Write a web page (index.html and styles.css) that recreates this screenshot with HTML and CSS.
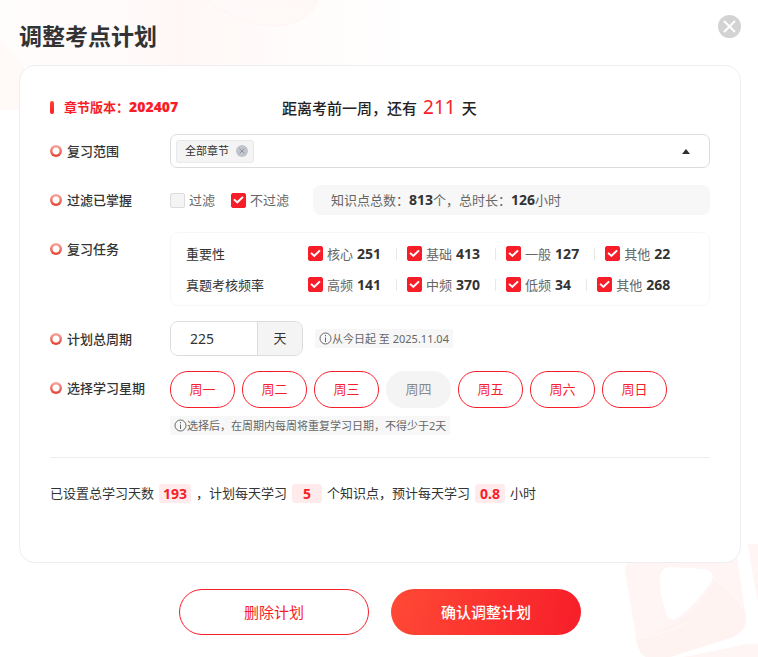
FILE: index.html
```html
<!DOCTYPE html>
<html lang="zh-CN">
<head>
<meta charset="utf-8">
<meta name="viewport" content="width=device-width, initial-scale=1">
<title>调整考点计划</title>
<link rel="stylesheet" href="styles.css">
</head>
<body>
<main class="dialog">
  <svg class="decor decor-top" width="420" height="120" viewBox="0 0 420 120" aria-hidden="true">
    <defs>
      <linearGradient id="wash" x1="0" x2="1" y1="0" y2="0">
        <stop offset="0" stop-color="#fffcfc"/><stop offset=".29" stop-color="#fffbfb"/><stop offset=".42" stop-color="#fff7f6"/><stop offset=".7" stop-color="#fffcfb"/><stop offset="1" stop-color="#fff"/>
      </linearGradient>
      <linearGradient id="drop" x1="0" x2="1" y1="0" y2="0">
        <stop offset="0" stop-color="#fffafa"/><stop offset="1" stop-color="#fef8f6"/>
      </linearGradient>
    </defs>
    <path d="M0 0H420V66H0Z" fill="url(#wash)"/>
    <path d="M0 38Q14 60 24 66V110H0Z" fill="#fff9f8"/>
    <path d="M205 0Q244 26 276 26Q308 24 318 0Z" fill="url(#drop)" stroke="#fdf5f3"/>
  </svg>
  <svg class="decor decor-bottom" width="134" height="114" viewBox="0 0 134 114" aria-hidden="true">
    <path d="M1 28Q1 20 8 14H113L122 74Q123 89 106 95L46 114H22Q15 110 13 100Z" fill="#fff5f4"/>
    <path d="M11 96Q66 84 91 38Q112 50 122 74Q123 89 106 95L46 114H22Q15 110 13 100Z" fill="#fff3f2"/>
    <path d="M11 96Q40 92 62 80M92 38Q112 50 122 70" fill="none" stroke="#fffaf9"/>
    <path d="M36 36Q36 24 48 24L80 26Q93 29 87 39Q75 58 56 73Q44 82 41 67Q36 52 36 36Z" fill="#fff"/>
    <path d="M124 1H134V58Q130 42 124 1ZM59 114L109 104Q122 100 134 101V114Z" fill="#fff5f4"/>
  </svg>

  <header class="dialog-header">
    <h1>调整考点计划</h1>
    <button class="close" type="button" aria-label="关闭">
      <svg width="23" height="23" viewBox="0 0 23 23" aria-hidden="true"><circle cx="11.500" cy="11.500" r="11.500" fill="#d3d3d3"/><path d="M6 6L17 17M17 6L6 17" stroke="#fff" stroke-width="2"/></svg>
    </button>
  </header>

  <form id="plan" class="card">
    <div class="intro">
      <p class="version">章节版本：<b>202407</b></p>
      <p class="countdown">距离考前一周，还有<span class="days">211</span>天</p>
    </div>

    <div class="row">
      <span class="label" id="range-label">复习范围</span>
      <div class="picker" role="group" aria-labelledby="range-label">
        <span class="tag">全部章节
          <button type="button" aria-label="移除全部章节"><svg width="12" height="12" viewBox="0 0 12 12" aria-hidden="true"><circle cx="6" cy="6" r="6" fill="#c0c4cc"/><path d="M3.500 3.500L8.500 8.500M8.500 3.500L3.500 8.500" stroke="#909399"/></svg></button>
        </span>
        <button class="toggle" type="button" aria-label="展开章节列表" aria-haspopup="listbox"><svg width="8" height="5" viewBox="0 0 8 5" aria-hidden="true"><path d="M4 0L8 5H0Z" fill="#303133"/></svg></button>
      </div>
    </div>

    <div class="row">
      <span class="label">过滤已掌握</span>
      <div class="filter">
        <div class="filter-options">
          <label class="check"><input type="checkbox">过滤</label>
          <label class="check"><input type="checkbox" checked>不过滤</label>
        </div>
        <p class="stats">知识点总数：<b>813</b>个，总时长：<b>126</b>小时</p>
      </div>
    </div>

    <div class="row row-tasks">
      <span class="label">复习任务</span>
      <div class="tasks">
        <div class="task">
          <span class="task-name">重要性</span>
          <div class="task-options">
            <label class="check"><input type="checkbox" checked>核心 <b>251</b></label>
            <label class="check"><input type="checkbox" checked>基础 <b>413</b></label>
            <label class="check"><input type="checkbox" checked>一般 <b>127</b></label>
            <label class="check"><input type="checkbox" checked>其他 <b>22</b></label>
          </div>
        </div>
        <div class="task">
          <span class="task-name">真题考核频率</span>
          <div class="task-options">
            <label class="check"><input type="checkbox" checked>高频 <b>141</b></label>
            <label class="check"><input type="checkbox" checked>中频 <b>370</b></label>
            <label class="check"><input type="checkbox" checked>低频 <b>34</b></label>
            <label class="check"><input type="checkbox" checked>其他 <b>268</b></label>
          </div>
        </div>
      </div>
    </div>

    <div class="row">
      <label class="label" for="period">计划总周期</label>
      <div class="period">
        <div class="period-box"><input id="period" type="text" inputmode="numeric" value="225"><span class="unit">天</span></div>
        <p class="note"><svg width="13" height="13" viewBox="0 0 13 13" aria-hidden="true"><circle cx="6.500" cy="6.500" r="5.500" fill="none" stroke="#666"/><path d="M6.500 5.500V10M6.500 3V4.300" stroke="#666"/></svg>从今日起 至 2025.11.04</p>
      </div>
    </div>

    <div class="row row-week">
      <span class="label" id="week-label">选择学习星期</span>
      <div>
        <div class="week" role="group" aria-labelledby="week-label">
          <button type="button" aria-pressed="true">周一</button>
          <button type="button" aria-pressed="true">周二</button>
          <button type="button" aria-pressed="true">周三</button>
          <button type="button" aria-pressed="false">周四</button>
          <button type="button" aria-pressed="true">周五</button>
          <button type="button" aria-pressed="true">周六</button>
          <button type="button" aria-pressed="true">周日</button>
        </div>
        <p class="note"><svg width="13" height="13" viewBox="0 0 13 13" aria-hidden="true"><circle cx="6.500" cy="6.500" r="5.500" fill="none" stroke="#666"/><path d="M6.500 5.500V10M6.500 3V4.300" stroke="#666"/></svg>选择后，在周期内每周将重复学习日期，不得少于2天</p>
      </div>
    </div>

    <p class="summary">已设置总学习天数<b>193</b>，计划每天学习<b>5</b>个知识点，预计每天学习<b>0.8</b>小时</p>
  </form>

  <footer class="actions">
    <button class="action" type="button">删除计划</button>
    <button class="action action-primary" type="submit" form="plan">确认调整计划</button>
  </footer>
</main>
</body>
</html>
```
FILE: styles.css
```css
* {
  box-sizing: border-box;
}

body,
h1,
p {
  margin: 0;
}

body {
  background: #fff;
  color: #333;
  font: 13px/20px "Noto Sans", "Noto Sans CJK SC", sans-serif;
}

button,
input {
  font: inherit;
  color: inherit;
}

button {
  padding: 0;
  border: 0;
  background: none;
  cursor: pointer;
}

svg {
  display: block;
  flex: none;
}

b {
  font-size: 14px;
}

.dialog {
  position: relative;
  min-height: 100vh;
  padding: 0 17px 22px 19px;
  overflow: hidden;
}

.decor {
  position: absolute;
}

.decor-top {
  top: 0;
  left: 0;
}

.decor-bottom {
  right: 0;
  bottom: 0;
}

.dialog-header {
  position: relative;
  display: flex;
  justify-content: space-between;
  height: 65px;
}

.dialog-header h1 {
  padding-top: 19px;
  font-size: 23px;
  line-height: 34px;
}

.close {
  align-self: flex-start;
  margin-top: 15px;
}

.card {
  position: relative;
  min-height: 498px;
  padding: 29px 30px;
  border: 1px solid #eee;
  border-radius: 16px;
  background: #fff;
}

.intro {
  display: flex;
  align-items: center;
  height: 24px;
  margin-bottom: 15px;
}

.version {
  display: flex;
  align-items: center;
  width: 232px;
  color: #f71e29;
  font-weight: 600;
}

.version::before {
  content: "";
  width: 4px;
  height: 13px;
  margin-right: 10px;
  border-radius: 2px;
  background: linear-gradient(#ff4733, #f71e29);
}

.countdown {
  color: #222;
  font-size: 15px;
  font-weight: 500;
}

.days {
  margin: 0 6px;
  color: #f71e29;
  font-size: 19px;
  font-weight: 400;
}

.row {
  display: grid;
  grid-template-columns: 120px 1fr;
  align-items: center;
  margin-bottom: 17px;
}

.label {
  display: flex;
  align-items: center;
  gap: 5px;
  font-weight: 500;
}

.label::before {
  content: "";
  width: 12px;
  height: 12px;
  border-radius: 50%;
  background: radial-gradient(circle, #fff 3px, transparent 4px), linear-gradient(#f9aaa2, #e33e30);
}

.picker {
  display: flex;
  align-items: center;
  justify-content: space-between;
  height: 34px;
  padding: 0 19px 0 5px;
  border: 1px solid #dcdcdc;
  border-radius: 7px;
}

.tag {
  display: flex;
  align-items: center;
  gap: 7px;
  height: 23px;
  padding: 0 5px 0 8px;
  border: 1px solid #e9e9eb;
  border-radius: 3px;
  background: #f4f4f5;
  font-size: 11px;
}

.filter {
  display: flex;
  align-items: center;
}

.filter-options {
  display: flex;
  gap: 16px;
  width: 143px;
}

.check {
  display: flex;
  align-items: center;
  gap: 4px;
  color: #666;
  white-space: nowrap;
}

.check b,
.stats b {
  color: #333;
}

.check input {
  display: grid;
  place-items: center;
  width: 15px;
  height: 15px;
  margin: 0;
  border: 1px solid #dcdcdc;
  border-radius: 2px;
  background: #f4f4f4;
  appearance: none;
}

.check input:checked {
  border-color: #f71e29;
  background: #f71e29;
}

.check input:checked::after {
  content: "";
  width: 11px;
  height: 9px;
  background: #fff;
  clip-path: polygon(3% 50%, 15% 36%, 38% 62%, 84% 8%, 97% 21%, 39% 93%);
}

.stats {
  flex: 1;
  padding: 5px 18px;
  border-radius: 8px;
  background: #f7f7f7;
  color: #666;
}

.row-tasks,
.row-week {
  align-items: start;
}

.row-tasks .label,
.row-week .label {
  padding-top: 7px;
}

.tasks {
  padding: 5px 15px;
  border: 1px solid #f7f7f7;
  border-radius: 8px;
}

.row-tasks,
.row:has(.period) {
  margin-bottom: 15px;
}

.task {
  display: grid;
  grid-template-columns: 122px 1fr;
  align-items: center;
  height: 31px;
}

.task-options {
  display: flex;
  gap: 15px;
}

.task-options .check + .check::before {
  content: "";
  width: 1px;
  height: 12px;
  margin-right: 6px;
  background: #e8e8e8;
}

.period {
  display: flex;
  align-items: center;
  gap: 12px;
}

.period-box {
  display: flex;
  width: 133px;
  height: 35px;
  overflow: hidden;
  border: 1px solid #dcdcdc;
  border-radius: 8px;
}

.period-box input {
  flex: 1;
  min-width: 0;
  padding: 0 19px;
  border: 0;
  background: #fff;
  font-size: 14px;
}

.unit {
  width: 45px;
  border-left: 1px solid #dcdcdc;
  background: #f4f4f4;
  line-height: 33px;
  text-align: center;
}

.note {
  display: flex;
  align-items: center;
  width: fit-content;
  height: 19px;
  padding: 0 4px;
  border-radius: 2px;
  background: #f7f7f7;
  color: #666;
  font-size: 11px;
}

.row-week {
  margin-bottom: 0;
  padding-bottom: 22px;
  border-bottom: 1px solid #eee;
}

.week {
  display: flex;
  flex-wrap: wrap;
  gap: 7px;
  margin-bottom: 8px;
}

.week button {
  width: 65px;
  height: 37px;
  padding-bottom: 2px;
  border: 1px solid #f71e29;
  border-radius: 18px;
  color: #f71e29;
}

.week button[aria-pressed="false"] {
  border-color: #f4f4f4;
  background: #f4f4f4;
  color: #888;
}

.summary {
  display: flex;
  flex-wrap: wrap;
  align-items: center;
  margin-top: 25px;
}

.summary b {
  min-width: 30px;
  margin: 0 5px;
  padding: 0 4px;
  border-radius: 3px;
  background: #ffebeb;
  color: #f71e29;
  line-height: 19px;
  text-align: center;
}

.actions {
  position: relative;
  display: flex;
  justify-content: center;
  gap: 22px;
  margin-top: 26px;
}

.action {
  width: 190px;
  height: 46px;
  border: 1px solid #f71e29;
  border-radius: 23px;
  background: #fff;
  color: #f71e29;
  font-size: 15px;
}

.action-primary {
  border: 0;
  background: linear-gradient(100deg, #ff4935, #f71e29);
  color: #fff;
  font-weight: 500;
}
```
